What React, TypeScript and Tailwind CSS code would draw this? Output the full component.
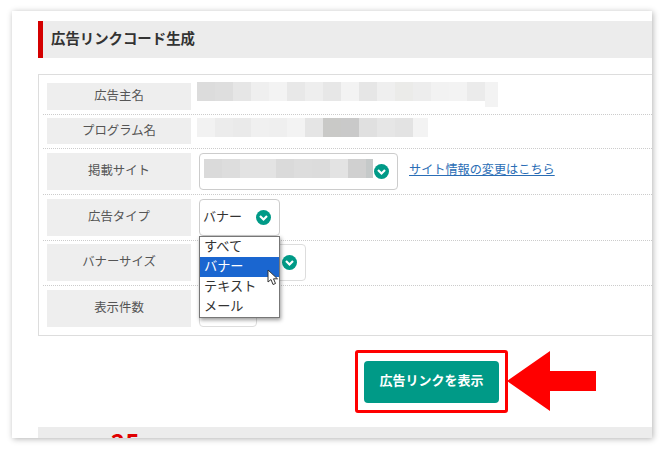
const row1 = ["bg-[#dcdcdc]","bg-[#dedede]","bg-[#e6e6e6]","bg-[#efefef]","bg-[#f3f3f3]","bg-[#e8e8e8]","bg-[#eeeeee]","bg-[#e7e7e7]","bg-[#f3f3f3]","bg-[#e6e6e6]","bg-[#efefef]","bg-[#ebebe9]","bg-[#ededed]","bg-[#f2f2f2]","bg-[#f3f3f3]","bg-[#ebebeb]"]
const row2 = ["bg-[#f2f2f2]","bg-[#ececec]","bg-[#eaeaea]","bg-[#f0f0f0]","bg-[#efefef]","bg-[#f3f3f3]","bg-[#e5e5e5]","bg-[#c9c9c7]","bg-[#c9c9c9]","bg-[#e0e0e0]","bg-[#e6e6e6]","bg-[#e3e3e3]"]
const row3 = ["bg-[#dadada]","bg-[#dddddd]","bg-[#e3e3e3]","bg-[#e3e3e3]","bg-[#dadada]","bg-[#dddddd]","bg-[#dcdcdc]","bg-[#e3e3e3]","bg-[#d0d0d0]"]

function Blocks({ cells }: { cells: string[] }) {
    return (
        <>
            {cells.map((c, i) => (
                <div key={i} className={`w-[18px] h-[19px] shrink-0 ${c}`} />
            ))}
        </>
    )
}

function Chevron() {
    return (
        <svg width="15" height="15" viewBox="0 0 15 15" className="shrink-0">
            <circle cx="7.5" cy="7.5" r="7.5" fill="#009a87" />
            <path d="M4 6 L7.5 9.5 L11 6" fill="none" stroke="#fff" strokeWidth="2.2" />
        </svg>
    )
}

function Label({ text, h }: { text: string, h: string }) {
    return (
        <div className={`w-[144px] shrink-0 bg-[#eeeeee] flex items-center justify-center pb-[2px] text-[12.4px] text-[#555555] ${h}`}>
            {text}
        </div>
    )
}

export default function App() {
    return (
        <div className="w-[664px] h-[451px] bg-white overflow-hidden pt-[11px] pl-[12px] font-['Noto_Sans_CJK_JP',sans-serif]">
            <div className="relative w-[640px] h-[427px] overflow-hidden bg-white pt-[10px] pl-[26px] shadow-[1px_1px_6px_rgba(0,0,0,0.3)]">
                <div className="h-[37px] bg-[#ececec] border-l-[5px] border-[#d40000] flex items-center pl-[8px] pb-[4px] text-[14.4px] font-bold text-[#333333]">
                    広告リンクコード生成
                </div>

                <div className="mt-[16px] h-[262px] border border-r-0 border-[#dddddd] pl-[4px]">
                    <div className="flex h-[40px] pt-[8px] pl-[4px] border-b border-dotted border-[#cccccc]">
                        <Label text="広告主名" h="h-[27px]" />
                        <div className="flex ml-[6px] -mt-[1px] items-start">
                            <Blocks cells={row1} />
                            <div className="w-[13px] h-[25px] bg-[#f3f3f3]" />
                        </div>
                    </div>
                    <div className="flex h-[34px] pt-[3px] pl-[4px] border-b border-dotted border-[#cccccc]">
                        <Label text="プログラム名" h="h-[26px]" />
                        <div className="flex ml-[6px] items-start">
                            <Blocks cells={row2} />
                            <div className="w-[15px] h-[19px] bg-[#f3f3f3]" />
                        </div>
                    </div>
                    <div className="flex h-[46px] pt-[4px] pl-[4px] border-b border-dotted border-[#cccccc]">
                        <Label text="掲載サイト" h="h-[37px]" />
                        <div className="ml-[8px] w-[199px] h-[37px] border border-[#cccccc] rounded pl-[4px] pt-[5px] flex items-start">
                            <Blocks cells={row3} />
                            <div className="w-[7px] h-[19px] bg-[#c5c9c9]" />
                            <div className="mt-[5px] ml-[1px]"><Chevron /></div>
                        </div>
                        <a className="ml-[11px] mt-[7px] h-[18px] leading-[18px] text-[12.15px] text-[#2a6db5] underline">サイト情報の変更はこちら</a>
                    </div>
                    <div className="flex h-[46px] pt-[4px] pl-[4px] border-b border-dotted border-[#cccccc]">
                        <Label text="広告タイプ" h="h-[37px]" />
                        <div className="relative z-10 ml-[8px] w-[81px] h-[37px] border border-[#cccccc] rounded pl-[3px] pr-[8px] flex items-center justify-between text-[13px] text-[#333333]">
                            <span className="-mt-[4px]">バナー</span>
                            <Chevron />
                            <div className="absolute top-[36px] -left-px w-[81px] h-[82px] bg-white border border-[#777777] shadow-[1px_2px_4px_rgba(0,0,0,0.4)] text-[13.2px] leading-[17px] text-[#333333]">
                                <div className="pl-[4px] h-[20px]">すべて</div>
                                <div className="pl-[4px] h-[20px] bg-[#1a66d0] text-white">バナー</div>
                                <div className="pl-[4px] h-[20px]">テキスト</div>
                                <div className="pl-[4px] h-[20px]">メール</div>
                                <svg width="14" height="18" viewBox="0 0 14 18" className="absolute left-[67px] top-[32px]">
                                    <path d="M1 1 L1 13 L4 10.5 L6 15.5 L8.5 14.5 L6.5 9.8 L10.5 9.8 Z" fill="#fff" stroke="#333" strokeWidth="1" />
                                </svg>
                            </div>
                        </div>
                    </div>
                    <div className="flex h-[45px] pt-[3px] pl-[4px] border-b border-dotted border-[#cccccc]">
                        <Label text="バナーサイズ" h="h-[37px]" />
                        <div className="ml-[8px] w-[107px] h-[37px] border border-[#dddddd] rounded pr-[8px] flex items-center justify-end">
                            <Chevron />
                        </div>
                    </div>
                    <div className="flex pt-[4px] pl-[4px]">
                        <Label text="表示件数" h="h-[37px]" />
                        <div className="ml-[8px] w-[58px] h-[37px] border border-[#dddddd] rounded" />
                    </div>
                </div>

                <div className="mt-[14px] ml-[317px] w-[153px] h-[63px] border-[3px] border-[#ff0000] rounded-[3px] flex items-center justify-center">
                    <button className="w-[135px] h-[42px] bg-[#009a87] rounded text-white text-[13px] font-bold pb-[3px]">広告リンクを表示</button>
                </div>

                <svg width="92" height="62" viewBox="0 0 92 62" className="absolute left-[494px] top-[339px]">
                    <path d="M1 31 L44 1 L44 21 L90 21 L90 41 L44 41 L44 61 Z" fill="#ff0000" />
                </svg>

                <div className="mt-[14px] h-[12px] bg-[#ececec] relative overflow-hidden">
                    <span className="absolute left-[73px] top-[3px] text-[24px] leading-[24px] font-bold text-[#e00000]">25</span>
                </div>
            </div>
        </div>
    )
}
